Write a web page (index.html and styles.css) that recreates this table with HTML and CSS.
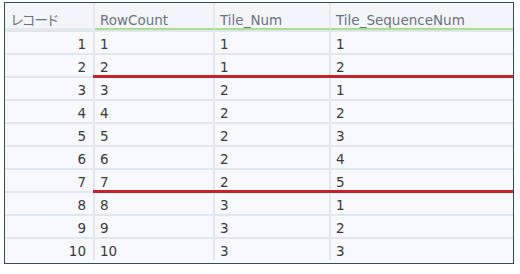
FILE: index.html
```html
<!DOCTYPE html>
<html lang="ja">
<head>
<meta charset="utf-8">
<link rel="stylesheet" href="styles.css">
</head>
<body>
<div class="frame">
  <div class="grid">
    <div class="hd rec">レコード</div>
    <div class="hd data">RowCount</div>
    <div class="hd data">Tile_Num</div>
    <div class="hd data last">Tile_SequenceNum</div>

    <div class="c rec">1</div><div class="c">1</div><div class="c">1</div><div class="c last">1</div>
    <div class="c rec">2</div><div class="c cut">2</div><div class="c cut">1</div><div class="c last cut">2</div>
    <div class="c rec">3</div><div class="c">3</div><div class="c">2</div><div class="c last">1</div>
    <div class="c rec">4</div><div class="c">4</div><div class="c">2</div><div class="c last">2</div>
    <div class="c rec">5</div><div class="c">5</div><div class="c">2</div><div class="c last">3</div>
    <div class="c rec">6</div><div class="c">6</div><div class="c">2</div><div class="c last">4</div>
    <div class="c rec">7</div><div class="c cut">7</div><div class="c cut">2</div><div class="c last cut">5</div>
    <div class="c rec">8</div><div class="c">8</div><div class="c">3</div><div class="c last">1</div>
    <div class="c rec">9</div><div class="c">9</div><div class="c">3</div><div class="c last">2</div>
    <div class="c rec">10</div><div class="c">10</div><div class="c">3</div><div class="c last">3</div>
  </div>
</div>
</body>
</html>
```
FILE: styles.css
```css
html, body {
  margin: 0;
  padding: 0;
  background: #ffffff;
}

.frame {
  margin: 2px 0 0 4px;
  width: 508px;
  height: 260px;
  border: 1px solid #2e4d5a;
  background: #f7f9fd;
  overflow: hidden;
}

.grid {
  display: grid;
  grid-template-columns: 90px 120px 116px 1fr;
  grid-template-rows: 27px repeat(10, 23px);
  font-family: "DejaVu Sans", "Noto Sans CJK JP", sans-serif;
  font-size: 13.5px;
  color: #3a3a3a;
}

.hd {
  background: #f3f5f9;
  color: #6b7380;
  border-right: 2px solid #e6e9ef;
  padding: 9px 0 0 5px;
  box-sizing: border-box;
  position: relative;
}

.hd.data {
  border-bottom: 2px solid #a9e08e;
}

.hd.rec {
  font-family: "Noto Sans CJK JP", sans-serif;
  font-feature-settings: "palt";
  font-size: 13.5px;
  padding: 6px 0 0 6px;
  letter-spacing: -0.5px;
  border-bottom: 2px solid #e6e9ef;
}

.last {
  border-right: none !important;
}

.c {
  background: #f8f9fd;
  border-right: 2px solid #e2e6ed;
  border-top: 2px solid #e2e6ed;
  padding: 4px 0 0 5px;
  box-sizing: border-box;
  position: relative;
}

.c.rec {
  text-align: right;
  padding: 4px 7px 0 0;
}

.c.cut::after {
  content: "";
  position: absolute;
  left: -2px;
  right: 0;
  bottom: -2px;
  height: 3px;
  background: #c7222a;
  z-index: 1;
}

.c.last.cut::after {
  right: -4px;
}
```
